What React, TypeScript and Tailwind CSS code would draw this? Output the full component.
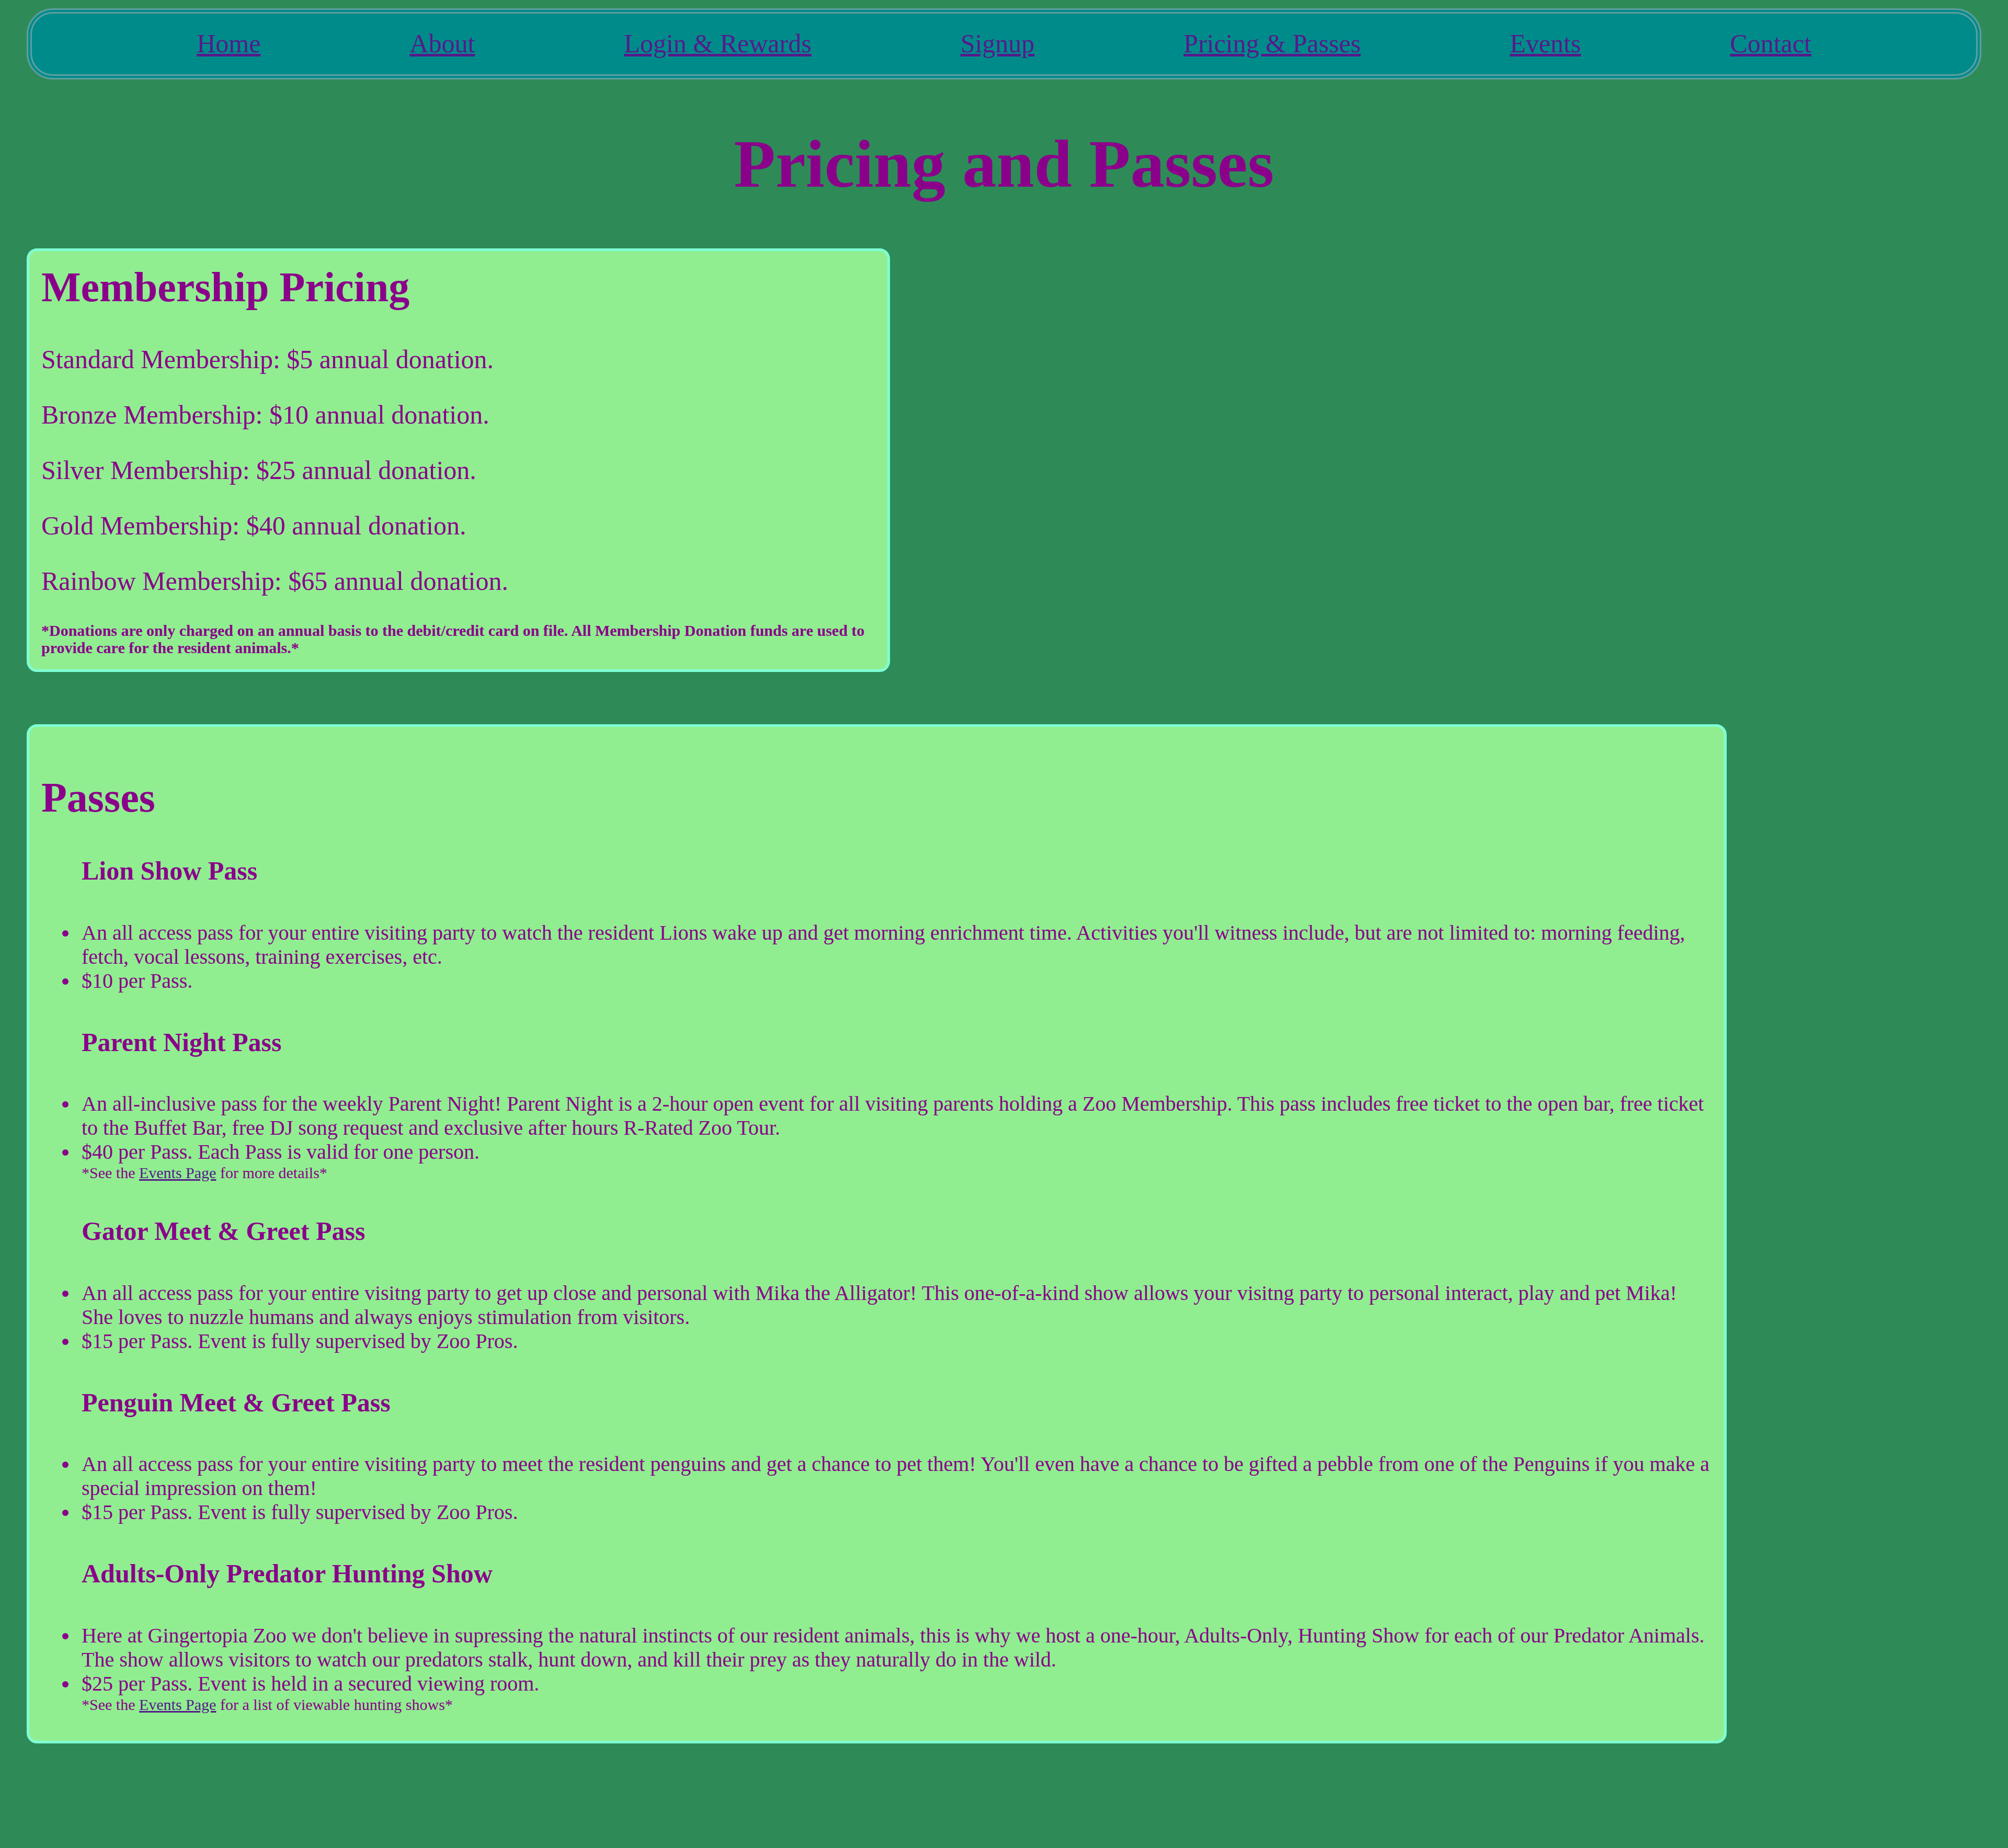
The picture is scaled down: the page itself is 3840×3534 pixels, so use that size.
import React from 'react';

interface Pass {
  title: string;
  lines: string[];
  note?: string;
}

const navLinks = ['Home', 'About', 'Login & Rewards', 'Signup', 'Pricing & Passes', 'Events', 'Contact'];

const memberships = [
  'Standard Membership: $5 annual donation.',
  'Bronze Membership: $10 annual donation.',
  'Silver Membership: $25 annual donation.',
  'Gold Membership: $40 annual donation.',
  'Rainbow Membership: $65 annual donation.',
];

const passes: Pass[] = [
  {
    title: 'Lion Show Pass',
    lines: [
      "An all access pass for your entire visiting party to watch the resident Lions wake up and get morning enrichment time. Activities you'll witness include, but are not limited to: morning feeding, fetch, vocal lessons, training exercises, etc.",
      '$10 per Pass.',
    ],
  },
  {
    title: 'Parent Night Pass',
    lines: [
      'An all-inclusive pass for the weekly Parent Night! Parent Night is a 2-hour open event for all visiting parents holding a Zoo Membership. This pass includes free ticket to the open bar, free ticket to the Buffet Bar, free DJ song request and exclusive after hours R-Rated Zoo Tour.',
      '$40 per Pass. Each Pass is valid for one person.',
    ],
    note: 'for more details*',
  },
  {
    title: 'Gator Meet & Greet Pass',
    lines: [
      'An all access pass for your entire visitng party to get up close and personal with Mika the Alligator! This one-of-a-kind show allows your visitng party to personal interact, play and pet Mika! She loves to nuzzle humans and always enjoys stimulation from visitors.',
      '$15 per Pass. Event is fully supervised by Zoo Pros.',
    ],
  },
  {
    title: 'Penguin Meet & Greet Pass',
    lines: [
      "An all access pass for your entire visiting party to meet the resident penguins and get a chance to pet them! You'll even have a chance to be gifted a pebble from one of the Penguins if you make a special impression on them!",
      '$15 per Pass. Event is fully supervised by Zoo Pros.',
    ],
  },
  {
    title: 'Adults-Only Predator Hunting Show',
    lines: [
      "Here at Gingertopia Zoo we don't believe in supressing the natural instincts of our resident animals, this is why we host a one-hour, Adults-Only, Hunting Show for each of our Predator Animals. The show allows visitors to watch our predators stalk, hunt down, and kill their prey as they naturally do in the wild.",
      '$25 per Pass. Event is held in a secured viewing room.',
    ],
    note: 'for a list of viewable hunting shows*',
  },
];

const PricingPasses: React.FC = () => {
  return (
    <div className="min-h-screen bg-[#2e8b57] pt-[16px] pb-[200px] font-['Liberation_Serif','Times_New_Roman',serif] text-[#8b008b] flow-root">
      {/* Top nav */}
      <nav className="mx-[51px] rounded-[50px] border-[10px] border-double border-[#5f9ea0] bg-[#008b8b] py-[29px]">
        <ul className="flex justify-center gap-[285px] text-[50px] leading-[57.5px]">
          {navLinks.map((link) => (
            <li key={link}>
              <a href="#" className="text-[#551a8b] underline">
                {link}
              </a>
            </li>
          ))}
        </ul>
      </nav>

      <h1 className="my-[87px] text-center text-[130px] font-bold leading-[149.5px]">Pricing and Passes</h1>

      {/* Membership Pricing */}
      <section className="ml-[51px] w-[1651px] rounded-[20px] border-[5px] border-[#7fffd4] bg-[#90ee90] px-[23px] pt-[23px] pb-[25px]">
        <h2 className="mb-[64px] text-[80px] font-bold leading-[92px]">Membership Pricing</h2>
        {memberships.map((m) => (
          <p key={m} className="my-[50px] text-[50px] leading-[56px] first-of-type:mt-0">
            {m}
          </p>
        ))}
        <h6 className="text-[30px] font-bold leading-[33px]">
          *Donations are only charged on an annual basis to the debit/credit card on file. All Membership Donation funds
          are used to provide care for the resident animals.*
        </h6>
      </section>

      {/* Passes */}
      <section className="mt-[100px] ml-[51px] w-[3251px] rounded-[20px] border-[5px] border-[#7fffd4] bg-[#90ee90] pt-[23px] pr-[27px] pb-[12px] pl-[23px] flow-root">
        <h2 className="mt-[66px] mb-[66px] text-[80px] font-bold leading-[92px]">Passes</h2>
        {passes.map((pass) => (
          <div key={pass.title}>
            <h3 className="my-[66px] pl-[77px] text-[50px] font-bold leading-[57.5px]">{pass.title}</h3>
            <ul className="my-[40px] list-disc pl-[71px] text-[40px] leading-[46px]">
              {pass.lines.map((line) => (
                <li key={line} className="pl-[6px]">{line}</li>
              ))}
              {pass.note && (
                <div className="pl-[6px] text-[30px] leading-[34px]">
                  *See the{' '}
                  <a href="#" className="text-[#551a8b] underline">
                    Events Page
                  </a>{' '}
                  {pass.note}
                </div>
              )}
            </ul>
          </div>
        ))}
      </section>
    </div>
  );
};

export default PricingPasses;
